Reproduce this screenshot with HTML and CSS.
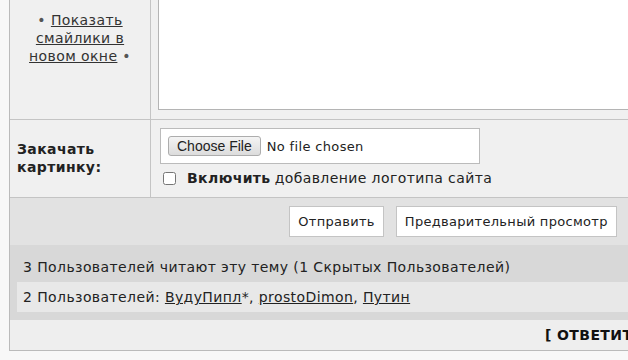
FILE: index.html
```html
<!DOCTYPE html>
<html lang="ru">
<head>
    <meta charset="UTF-8">
    <title>Ответ в тему</title>
    <link rel="stylesheet" href="styles.css">
</head>
<body>
    <form class="post-form">
        <div class="post-row">
            <div class="label-cell smilies">
                • <a href="#">Показать смайлики в новом окне</a> •
            </div>
            <div class="field-cell">
                <textarea class="post-text"></textarea>
            </div>
        </div>

        <div class="post-row upload-row">
            <div class="label-cell"><b>Закачать картинку:</b></div>
            <div class="field-cell">
                <div class="file-box"><input type="file" name="upload"></div>
                <label class="logo-check">
                    <input type="checkbox" name="add_logo">
                    <b>Включить</b> добавление логотипа сайта
                </label>
            </div>
        </div>

        <div class="submit-row">
            <button type="button" class="form-button">Отправить</button>
            <button type="button" class="form-button">Предварительный просмотр</button>
        </div>

        <div class="stats">
            <div class="stats-title">3 Пользователей читают эту тему (1 Скрытых Пользователей)</div>
            <div class="stats-users">
                2 Пользователей: <a href="#">ВудуПипл</a>*, <a href="#">prostoDimon</a>, <a href="#">Путин</a>
            </div>
        </div>

        <div class="reply-row">
            <a href="#" class="reply-link">[ ОТВЕТИТЬ ]</a>
        </div>
    </form>
</body>
</html>
```

FILE: styles.css
```css
html, body {
    overflow: hidden;
}
body {
    margin: 0;
    padding: 0 0 0 9px;
    background: #f8f8f8;
    font-family: "DejaVu Sans", Verdana, sans-serif;
    font-size: 14px;
    letter-spacing: 0.4px;
    color: #222;
}
a {
    color: #333;
}
.post-form {
    width: 886px;
    margin-top: -12px;
    border: 1px solid #bbb;
    border-top: none;
    background: #eee;
}
.post-row {
    display: flex;
    background: #f0f0f0;
    border-bottom: 1px solid #c4c4c4;
}
.label-cell {
    width: 141px;
    flex: none;
    border-right: 1px solid #c4c4c4;
    padding: 0 7px;
    box-sizing: border-box;
    display: flex;
    align-items: center;
    line-height: 18px;
}
.smilies {
    display: block;
    text-align: center;
    padding: 23px 2px 0;
    color: #555;
}
.field-cell {
    flex: 1;
    padding: 7px 7px 9px 7px;
}
.post-text {
    display: block;
    width: 100%;
    height: 115px;
    box-sizing: border-box;
    border: 1px solid #b4b4b4;
    background: #fff;
    resize: none;
}
.upload-row .label-cell {
    padding-bottom: 2px;
}
.upload-row .field-cell {
    padding: 8px 9px 10px 9px;
}
.file-box {
    width: 320px;
    box-sizing: border-box;
    padding: 7px;
    border: 1px solid #bbb;
    background: #fff;
}
.file-box input {
    font-family: "DejaVu Sans", Verdana, sans-serif;
    font-size: 13px;
    letter-spacing: 0.35px;
    color: #222;
}
.file-box input::file-selector-button {
    font-family: "Liberation Sans", Arial, sans-serif;
    font-size: 14px;
    letter-spacing: 0;
    height: 20px;
    padding: 0 8px;
    margin-right: 6px;
    color: #222;
    border: 1px solid #adadad;
    border-radius: 3px;
    background: linear-gradient(#f4f4f4, #dcdcdc);
}
.logo-check {
    display: flex;
    align-items: center;
    margin-top: 5px;
    line-height: 18px;
}
.logo-check input {
    width: 13px;
    height: 13px;
    margin: 0 11px 0 3px;
}
.logo-check b {
    margin-right: 4px;
}
.submit-row {
    display: flex;
    justify-content: center;
    gap: 12px;
    padding: 8px 0;
    background: #e2e2e2;
}
.form-button {
    height: 31px;
    padding: 0 8px;
    border: 1px solid #c4c4c4;
    background: #fff;
    font-family: "DejaVu Sans", Verdana, sans-serif;
    font-size: 13px;
    letter-spacing: 0.3px;
    color: #222;
}
.stats {
    background: #d8d8d8;
    padding: 14px 0 8px 7px;
}
.stats-title {
    padding-left: 6px;
    line-height: 17px;
    margin-bottom: 6px;
}
.stats-users {
    background: #e8e8e8;
    padding: 6px;
    line-height: 18px;
}
.stats-users a {
    color: #222;
}
.reply-row {
    height: 30px;
    line-height: 30px;
    padding-left: 535px;
}
.reply-link {
    font-weight: bold;
    color: #111;
    text-decoration: none;
}
```
